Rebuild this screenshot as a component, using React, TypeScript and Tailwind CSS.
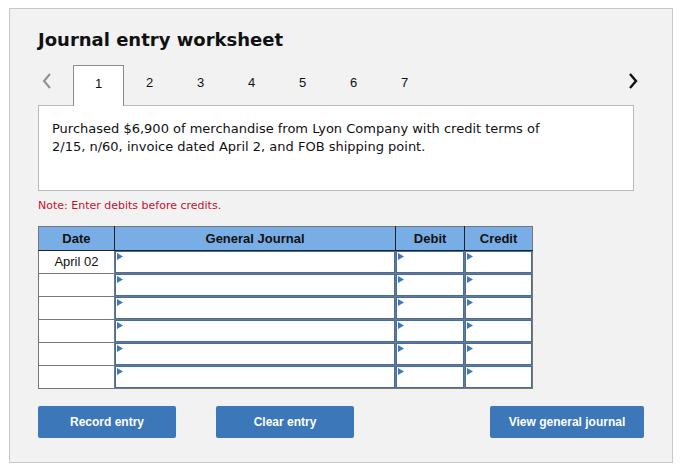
import React from "react";

const rows = ["April 02", "", "", "", "", ""];

function Tri() {
  return (
    <svg className="absolute left-[1px] top-[1px]" width="6" height="8" viewBox="0 0 6 8">
      <path d="M0 0 L6 3.5 L0 7 Z" fill="#3a78c6" />
    </svg>
  );
}

function InputCell() {
  return (
    <div className="relative h-[22px] border border-[#3d6fae] bg-white">
      <Tri />
    </div>
  );
}

export default function App() {
  return (
    <div className="w-[681px] h-[472px] bg-white pt-[8px] pl-[9px]">
      <div className="w-[664px] h-[455px] border border-[#c8c8c8] bg-[#f2f2f2] pl-[28px] pt-[20px]">
        <div
          className="text-[18px] leading-[22px] font-bold text-[#111]"
          style={{ fontFamily: '"DejaVu Sans", Verdana, sans-serif' }}
        >
          Journal entry worksheet
        </div>

        <div className="mt-[14px] flex items-end h-[41px] relative">
          <div className="absolute left-[2px] top-[7px]">
            <svg width="14" height="18" viewBox="0 0 14 18">
              <path d="M10 2 L4 9 L10 16" fill="none" stroke="#8f8f8f" strokeWidth="2" />
            </svg>
          </div>
          <div className="absolute left-[588px] top-[7px]">
            <svg width="14" height="18" viewBox="0 0 14 18">
              <path d="M4 2 L10 9 L4 16" fill="none" stroke="#111" strokeWidth="2.4" />
            </svg>
          </div>
          <div
            className="ml-[35px] flex h-[41px] text-[13px] text-[#111]"
            style={{ fontFamily: '"Liberation Sans", Arial, sans-serif' }}
          >
            {[1, 2, 3, 4, 5, 6, 7].map((n) => (
              <div
                key={n}
                className={
                  n === 1
                    ? "relative z-10 w-[51px] h-[41px] border border-b-0 border-[#8c8c8c] bg-white flex justify-center pt-[8px]"
                    : "w-[51px] h-[41px] flex justify-center pt-[8px]"
                }
              >
                {n}
              </div>
            ))}
          </div>
        </div>

        <div
          className="-mt-[1px] w-[596px] h-[86px] border border-[#b9b9b9] bg-white pl-[13px] pt-[14px] text-[13px] leading-[18px] text-[#111]"
          style={{ fontFamily: '"DejaVu Sans", Verdana, sans-serif' }}
        >
          <div>Purchased $6,900 of merchandise from Lyon Company with credit terms of</div>
          <div>2/15, n/60, invoice dated April 2, and FOB shipping point.</div>
        </div>

        <div
          className="mt-[8px] text-[11px] leading-[14px] text-[#c8102e]"
          style={{ fontFamily: '"DejaVu Sans", Verdana, sans-serif' }}
        >
          Note: Enter debits before credits.
        </div>

        <table
          className="mt-[13px] border-collapse w-[495px] text-[13px] text-[#111]"
          style={{ fontFamily: '"Liberation Sans", Arial, sans-serif' }}
        >
          <thead>
            <tr className="h-[24px] bg-[#78ade5]">
              <th className="w-[76px] border border-[#777] border-r-[#222] border-b-[#222] font-bold p-0">Date</th>
              <th className="w-[282px] border border-[#777] border-r-[#222] border-b-[#222] font-bold p-0">General Journal</th>
              <th className="w-[69px] border border-[#777] border-r-[#222] border-b-[#222] font-bold p-0">Debit</th>
              <th className="w-[68px] border border-[#777] border-b-[#222] font-bold p-0">Credit</th>
            </tr>
          </thead>
          <tbody>
            {rows.map((d, i) => (
              <tr key={i} className="h-[23px]">
                <td className="border border-[#777] bg-white p-0 text-center">{d}</td>
                <td className="border border-[#777] p-0">
                  <InputCell />
                </td>
                <td className="border border-[#777] p-0">
                  <InputCell />
                </td>
                <td className="border border-[#777] p-0">
                  <InputCell />
                </td>
              </tr>
            ))}
          </tbody>
        </table>

        <div
          className="mt-[17px] flex text-[12px] font-bold text-white"
          style={{ fontFamily: '"Liberation Sans", Arial, sans-serif' }}
        >
          <button className="w-[138px] h-[32px] rounded-[2px] bg-[#3b77b9]">Record entry</button>
          <button className="ml-[40px] w-[138px] h-[32px] rounded-[2px] bg-[#3b77b9]">Clear entry</button>
          <button className="ml-[136px] w-[154px] h-[32px] rounded-[2px] bg-[#3b77b9]">View general journal</button>
        </div>
      </div>
    </div>
  );
}
